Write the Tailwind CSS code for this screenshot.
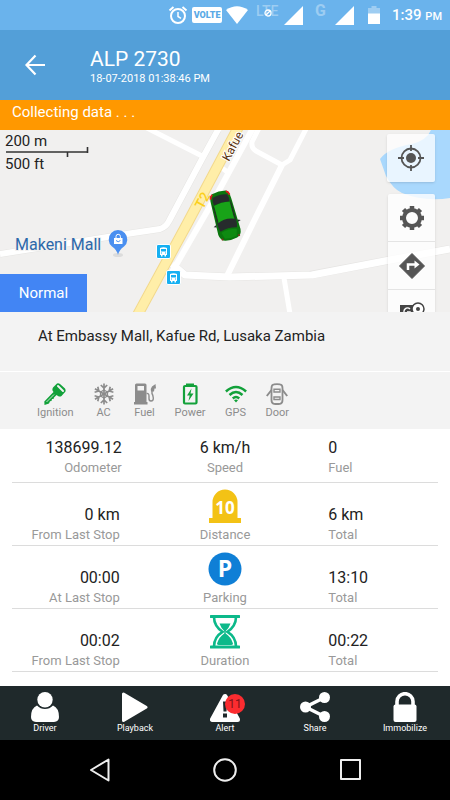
<!DOCTYPE html>
<html lang="en">
<head>
    <meta charset="UTF-8">
    <meta name="viewport" content="width=device-width, initial-scale=1.0">
    <title>ALP 2730</title>
    <script src="https://cdn.jsdelivr.net/npm/@tailwindcss/browser@4"></script>
</head>
<body class="bg-white text-[#222] font-['Roboto',sans-serif] antialiased">
<div class="min-h-screen flex flex-col">

    <!-- Status bar -->
    <div class="h-[30px] bg-[#6ab3ec] text-white flex items-center justify-end pr-2">
        <svg class="w-5 h-5 mr-1" viewBox="0 0 20 20" fill="none" stroke="#fff" stroke-width="2">
            <circle cx="10" cy="11" r="7"/>
            <path d="M10 7v4.500l3 1.800" stroke-width="1.500"/>
            <path d="M1.500 5.500l4-3.500M18.500 5.500l-4-3.500"/>
        </svg>
        <span class="w-[30px] h-4 bg-white rounded-xs text-[#5aa9e6] text-[9px] leading-4 font-black text-center mr-1">VOLTE</span>
        <svg class="w-[22px] h-[18px] mr-2" viewBox="0 0 22 18"><path d="M0 4Q11 -3.500 22 4L11 18Z" fill="#fff"/></svg>
        <span class="relative h-5 w-6 text-sm leading-3 font-medium text-white/35 mr-1">LTE
            <svg class="absolute left-2 top-1 w-2 h-2" viewBox="0 0 8 8" fill="none" stroke="#fff" stroke-width="1.300"><circle cx="4" cy="4" r="3"/><path d="M6 2L2 6"/></svg>
        </span>
        <svg class="w-[19px] h-[19px] mr-3" viewBox="0 0 19 19"><path d="M19 0V19H0Z" fill="#fff"/></svg>
        <span class="h-5 w-3 text-base leading-3 font-bold text-white/35 mr-2">G</span>
        <svg class="w-[19px] h-[19px] mr-3.5" viewBox="0 0 19 19"><path d="M19 0V19H0Z" fill="#fff"/></svg>
        <svg class="w-3 h-[18px] mr-3" viewBox="0 0 12 18"><path d="M3.500 0h5v2H12v6H0V2h3.500Z" fill="#fff" opacity=".35"/><path d="M0 7.500h12V18H0Z" fill="#fff"/></svg>
        <span class="text-[15px] font-medium">1:39 <span class="text-[11px]">PM</span></span>
    </div>

    <!-- Header -->
    <header class="h-[70px] bg-[#539fd8] text-white flex items-center pl-6">
        <button type="button" aria-label="Back" class="w-[66px]">
            <svg class="w-[22px] h-[22px]" viewBox="0 0 22 22" fill="none" stroke="#fff" stroke-width="2.200"><path d="M21 11H3M11.500 1.500L2.500 11l9 9.500"/></svg>
        </button>
        <div class="pt-1">
            <h1 class="text-[21px] leading-6">ALP 2730</h1>
            <p class="text-[11px] leading-4">18-07-2018 01:38:46 PM</p>
        </div>
    </header>
    <p class="h-[30px] bg-[#ff9800] text-white text-[15px] leading-6 px-3">Collecting data . . .</p>

    <!-- Map -->
    <div class="relative h-[182px] bg-[#f1f0ef] overflow-hidden">
        <svg class="w-full h-full" viewBox="0 0 450 182" preserveAspectRatio="xMidYMid slice">
            <path d="M431 0Q427 10 412 14Q388 18 380 29L386 46Q393 59 402 63Q425 72 450 68V0Z" fill="#a9d8fd"/>
            <g fill="none" stroke="#e6e5e3" stroke-width="8" stroke-linejoin="round">
                <path d="M0 124L133 103L160 99Q166 97 169 91L202 29L218 0" stroke-width="7"/>
                <path d="M172 134L185 145L230 147L310 145L390 130L450 119"/>
            </g>
            <g fill="none" stroke="#fff" stroke-linejoin="round">
                <path d="M0 124L133 103L160 99Q166 97 169 91L202 29L219 -2" stroke-width="6"/>
                <path d="M143 -4L202 26" stroke-width="5"/>
                <path d="M253 -2L216 66L172 142" stroke-width="6"/>
                <path d="M222 38L230 44" stroke-width="5"/>
                <path d="M259 -2L252 12Q251 18 256 21L282 35L290 30L307 -3" stroke-width="5"/>
                <path d="M282 35L254 91L226 148" stroke-width="6"/>
                <path d="M172 134L185 145L230 147L312 145L390 130L450 119" stroke-width="7"/>
                <path d="M284 148L290 184" stroke-width="5"/>
            </g>
            <path d="M137 186L187 94L240 -6" stroke="#f3d98c" stroke-width="11" fill="none"/>
            <path d="M137 186L187 94L240 -6" stroke="#ffeea8" stroke-width="9" fill="none"/>
            <text x="203" y="80" transform="rotate(-62 203 80)" font-size="14" font-weight="500" fill="#fbcf1c">T2</text>
            <text x="229" y="32" transform="rotate(-62 229 32)" font-size="12" fill="#5d3716" stroke="#fff" stroke-width="2" paint-order="stroke">Kafue</text>
            <!-- bus stops -->
            <g id="bus">
                <rect x="156.500" y="114.500" width="14" height="14" rx="1.500" fill="#16b0f2" stroke="#fff"/>
                <path d="M160 118q3.500-1.500 7 0v7h-1v1.500h-1.500V125h-2v1.500H161V125h-1Z" fill="#fff"/>
                <path d="M161 119h5v2.500h-5Z" fill="#16b0f2"/>
                <path d="M161 123h1M165 123h1" stroke="#16b0f2"/>
            </g>
            <use href="#bus" x="10" y="26"/>
            <text x="15" y="120" font-size="16" fill="#2c68aa" stroke="#f1f0ef" stroke-width="2" paint-order="stroke">Makeni Mall</text>
            <ellipse cx="118" cy="125" rx="5" ry="2" fill="#dcdcdc"/>
            <path d="M118 125Q117 120 112 116.500A9.300 9.300 0 1 1 124 116.500Q119 120 118 125Z" fill="#4a8ff0"/>
            <path d="M114 108h8.500v6H114Z" fill="#fff"/>
            <path d="M116 108v-1.500a2.200 2.200 0 0 1 4.400 0V108" fill="none" stroke="#fff"/>
            <path d="M116 110.500q2.200 2.500 4.400 0" fill="none" stroke="#4a8ff0"/>
            <!-- vehicle, seen from above -->
            <g transform="translate(225 85.500) rotate(-15)">
                <path d="M-7 -24Q0 -25.500 7 -24Q10.500 -22 10.500 -15L11.500 17Q11 23 6 24.500Q0 26 -6 24.500Q-11 23 -11.500 17L-10.500 -15Q-10.500 -22 -7 -24Z" fill="#0a760d"/>
                <path d="M-9.500 -14L-8 -10V3L-10 8ZM9.500 -14L8 -10V3L10 8Z" fill="#1d3a20"/>
                <path d="M-8 -12Q0 -14 8 -12V6H-8Z" fill="#18a318"/>
                <path d="M-7.500 -20Q0 -22.500 7.500 -20Q9 -16 8 -12.500Q0 -14 -8 -12.500Q-9 -16 -7.500 -20Z" fill="#262b2c"/>
                <path d="M-9.500 6Q0 1.500 9.500 6Q10 10 8.500 14.500Q0 12 -8.500 14.500Q-10 10 -9.500 6Z" fill="#262b2c"/>
                <path d="M-8 16Q0 13.500 8 16L6 22.500Q0 24 -6 22.500Z" fill="#0e8a11"/>
                <path d="M-11 7l-3 1.500 3 1ZM11 7l3 1.500-3 1Z" fill="#262b2c"/>
                <path d="M-9.800 -19Q-9.500 -22 -7 -23.300M9.800 -19Q9.500 -22 7 -23.300" stroke="#e01a1a" stroke-width="1.800" fill="none"/>
                <path d="M-9 22l1 1M9 22l-1 1" stroke="#8d2b1c" stroke-width="2"/>
            </g>
            <!-- scale bar -->
            <g font-size="15" fill="#222" stroke="#f1f0ef" stroke-width="2" paint-order="stroke">
                <text x="5" y="16">200 m</text>
                <text x="5" y="39">500 ft</text>
            </g>
            <path d="M6 22H88M87.500 17v6M67.500 22v5" stroke="#333" stroke-width="1.600" fill="none"/>
        </svg>

        <button type="button" class="absolute left-0 bottom-0 w-[87px] h-[38px] bg-[#4285f4] text-white text-[15px]">Normal</button>

        <div class="absolute right-[15px] top-1 flex flex-col items-end gap-3">
            <button type="button" aria-label="My location" class="w-12 h-12 bg-white/75 rounded-xs shadow flex items-center justify-center">
                <svg class="w-[26px] h-[26px]" viewBox="0 0 26 26" fill="none" stroke="#555" stroke-width="1.800"><circle cx="13" cy="13" r="9.500"/><circle cx="13" cy="13" r="5" fill="#555" stroke="none"/><path d="M13 0v6M13 20v6M0 13h6M20 13h6"/></svg>
            </button>
            <div class="w-[47px] bg-white/80 rounded-xs shadow-sm divide-y divide-[#e4e4e4]">
                <button type="button" aria-label="Settings" class="w-full h-12 flex items-center justify-center">
                    <svg class="w-6 h-6" viewBox="0 0 24 24" fill="none" stroke="#555">
                        <circle cx="12" cy="12" r="8" stroke-width="4"/>
                        <path d="M12 0v4M12 20v4M0 12h4M20 12h4M3.500 3.500l3 3M17.500 17.500l3 3M20.500 3.500l-3 3M6.500 17.500l-3 3" stroke-width="4.500"/>
                    </svg>
                </button>
                <button type="button" aria-label="Directions" class="w-full h-12 flex items-center justify-center">
                    <svg class="w-[26px] h-[26px]" viewBox="0 0 26 26"><path d="M13 0.500L25.500 13L13 25.500L0.500 13Z" fill="#555" stroke="#555" stroke-linejoin="round"/><path d="M9 17v-5.500h7" fill="none" stroke="#fff" stroke-width="2.500"/><path d="M15.500 7.500l5 4-5 4Z" fill="#fff"/></svg>
                </button>
                <button type="button" aria-label="Street view" class="w-full h-12 flex items-start justify-center pt-3">
                    <svg class="w-[26px] h-[26px]" viewBox="0 0 26 26"><path d="M1 3H20V24H1Z" fill="#444"/><path d="M11 7a3.500 3.500 0 1 0 0 5V10H8" fill="none" stroke="#fff" stroke-width="1.500"/><path d="M19 18Q13 10 13 7a6 6 0 0 1 12 0Q25 10 19 18Z" fill="#fff" stroke="#444" stroke-width="1.500"/><circle cx="19" cy="7" r="2" fill="#444"/></svg>
                </button>
            </div>
        </div>
    </div>

    <!-- Address and sensors -->
    <p class="h-[60px] bg-[#f3f3f3] border-b border-white text-[15px] leading-[48px] pl-[38px]">At Embassy Mall, Kafue Rd, Lusaka Zambia</p>
    <ul class="h-[57px] bg-[#f3f3f3] text-[#8c8c8c] text-[11px] leading-4 flex gap-[19px] pl-[37px] pt-[11px] text-center">
        <li class="flex flex-col items-center">
            <svg class="w-[22px] h-[22px]" viewBox="0 0 22 22"><path d="M13 .5Q14.500 0 16 1L21 5.500Q22 7 21.500 8.500L17.500 13Q16 14 14 13L12.500 12L10 14.500L9.500 16L8 16L7.500 18L6 18.200L5 20.500L.5 22L.3 18.500L9.500 9L8.500 7.500Q8 6 9 4.500Z" fill="#12a13a"/><path d="M14 3l5 5" stroke="#f3f3f3" stroke-width="2" stroke-linecap="round"/><path d="M2.500 19L10 11.500" stroke="#f3f3f3" stroke-width=".8"/></svg>
            <span>Ignition</span>
        </li>
        <li class="flex flex-col items-center">
            <svg class="w-[22px] h-[22px]" viewBox="0 0 22 22" fill="none" stroke="#8c8c8c" stroke-width="1.700">
                <g id="arm"><path d="M11 .5v21M7.800 2L11 5L14.200 2M7.800 20L11 17L14.200 20"/></g>
                <use href="#arm" transform="rotate(60 11 11)"/>
                <use href="#arm" transform="rotate(120 11 11)"/>
                <path d="M11 7L14.500 9V13L11 15L7.500 13V9Z" stroke-width="1.200"/>
            </svg>
            <span>AC</span>
        </li>
        <li class="flex flex-col items-center">
            <svg class="w-[22px] h-[22px]" viewBox="0 0 22 22"><path d="M1 2Q1 .5 2.500 .5H11Q12.500 .5 12.500 2V19H13.500V21.500H0V19H1ZM3.500 3V7.500H10V3Z" fill="#8c8c8c" fill-rule="evenodd"/><path d="M12.500 10.500Q15 10 15 13V15.500Q15 18 17 18Q19.500 18 19.300 15Q19 12 18 10.500V7" fill="none" stroke="#8c8c8c" stroke-width="1.400"/><path d="M21.500 1L18 3.500Q16.500 5 17 8.500H20L20.500 5.500H22Z" fill="#8c8c8c"/></svg>
            <span>Fuel</span>
        </li>
        <li class="flex flex-col items-center">
            <svg class="w-[22px] h-[22px]" viewBox="0 0 22 22"><path d="M7 2.500V.5H15V2.500" fill="#12a13a"/><rect x="5" y="3" width="12.500" height="17.500" rx="1" fill="none" stroke="#12a13a" stroke-width="2.200"/><path d="M12.500 5.500L8 12.500h2.700L9.500 18L14.500 10.500H11.500Z" fill="#12a13a"/></svg>
            <span>Power</span>
        </li>
        <li class="flex flex-col items-center">
            <svg class="w-[22px] h-[22px]" viewBox="0 0 22 22" fill="none" stroke="#12a13a" stroke-width="2.500"><path d="M.9 8.500Q11 -.5 21.100 8.500M4.500 12Q11 6 17.500 12M7.800 15.500Q11 12.500 14.200 15.500"/><path d="M9 17.200Q11 15.700 13 17.200L11 19.500Z" fill="#12a13a" stroke="none"/></svg>
            <span>GPS</span>
        </li>
        <li class="flex flex-col items-center">
            <svg class="w-[22px] h-[22px]" viewBox="0 0 22 22" fill="none" stroke="#8c8c8c" stroke-width="1.800"><path d="M5.500 5Q5.500 1.500 8 1.300Q11 .8 14 1.300Q16.500 1.500 16.500 5V17Q16.500 20.500 14 20.800Q11 21.200 8 20.800Q5.500 20.500 5.500 17Z"/><path d="M8 6.300H14V9H8ZM8 14H14V16.500H8Z" stroke-width="1.400"/><path d="M5.500 7L.8 13M16.500 7L21.200 13" stroke-width="2"/></svg>
            <span>Door</span>
        </li>
    </ul>

    <!-- Statistics -->
    <main class="flex-1 px-3 text-base leading-5">
        <section class="grid grid-cols-[17fr_32fr_17fr] pt-[9px] pb-1 border-b border-[#dcdcdc]">
            <div class="text-right">
                <p class="leading-5">138699.12</p>
                <p class="text-[13px] leading-5 text-[#999]">Odometer</p>
            </div>
            <div class="text-center">
                <p class="leading-5">6 km/h</p>
                <p class="text-[13px] leading-5 text-[#999]">Speed</p>
            </div>
            <div>
                <p class="leading-5">0</p>
                <p class="text-[13px] leading-5 text-[#999]">Fuel</p>
            </div>
        </section>
        <section class="grid grid-cols-[17fr_32fr_17fr] items-end pt-1.5 border-b border-[#dcdcdc]">
            <div class="text-right pr-0.5">
                <p>0 km</p>
                <p class="text-[13px] leading-5 text-[#999]">From Last Stop</p>
            </div>
            <div class="flex flex-col items-center">
                <svg class="w-8 h-9 pb-0.5" viewBox="0 0 32 34"><path d="M3.500 29V13A12.500 12.500 0 0 1 28.500 13V29H32V34H0V29Z" fill="#f3c215"/><text x="16" y="25" text-anchor="middle" font-size="17" font-weight="700" font-family="Open Sans" fill="#fff">10</text></svg>
                <p class="text-[13px] leading-5 text-[#999]">Distance</p>
            </div>
            <div>
                <p>6 km</p>
                <p class="text-[13px] leading-5 text-[#999]">Total</p>
            </div>
        </section>
        <section class="grid grid-cols-[17fr_32fr_17fr] items-end pt-1.5 border-b border-[#dcdcdc]">
            <div class="text-right pr-0.5">
                <p>00:00</p>
                <p class="text-[13px] leading-5 text-[#999]">At Last Stop</p>
            </div>
            <div class="flex flex-col items-center">
                <svg class="w-[34px] h-9 pb-0.5" viewBox="0 0 34 34"><circle cx="17" cy="17" r="16.500" fill="#0f7fd6"/><text x="17" y="25" text-anchor="middle" font-size="23" font-weight="700" font-family="Open Sans" fill="#fff">P</text></svg>
                <p class="text-[13px] leading-5 text-[#999]">Parking</p>
            </div>
            <div>
                <p>13:10</p>
                <p class="text-[13px] leading-5 text-[#999]">Total</p>
            </div>
        </section>
        <section class="grid grid-cols-[17fr_32fr_17fr] items-end pt-1.5 border-b border-[#dcdcdc]">
            <div class="text-right pr-0.5">
                <p>00:02</p>
                <p class="text-[13px] leading-5 text-[#999]">From Last Stop</p>
            </div>
            <div class="flex flex-col items-center">
                <svg class="w-[30px] h-9 pb-0.5" viewBox="0 0 30 34"><path d="M1 1.500H29M1 32H29" stroke="#0cb98a" stroke-width="3" stroke-linecap="round"/><path d="M4 2Q4 11 12.500 16.800Q4 22 4 31.500M26 2Q26 11 17.500 16.800Q26 22 26 31.500" fill="none" stroke="#0cb98a" stroke-width="2.600"/><path d="M9.500 8.500H20.500Q19 13 15.700 16V18.500Q21 22 23 28.500Q23 30 21 30H9Q7 30 7 28.500Q9 22 14.300 18.500V16Q11 13 9.500 8.500Z" fill="#0cb98a"/></svg>
                <p class="text-[13px] leading-5 text-[#999]">Duration</p>
            </div>
            <div>
                <p>00:22</p>
                <p class="text-[13px] leading-5 text-[#999]">Total</p>
            </div>
        </section>
    </main>

    <!-- Actions -->
    <nav class="h-[54px] bg-[#1f292b] text-white text-[9px] leading-3 grid grid-cols-5 pt-1.5">
        <a href="#" class="flex flex-col items-center">
            <svg class="w-[30px] h-[30px]" viewBox="0 0 30 30" fill="#fff"><circle cx="15" cy="7.700" r="7.700"/><path d="M7 13.500Q10.500 17 15 17Q19.500 17 23 13.500Q29 16 29 25Q29 29.500 24 30H6Q1 29.500 1 25Q1 16 7 13.500Z"/></svg>
            Driver
        </a>
        <a href="#" class="flex flex-col items-center">
            <svg class="w-[30px] h-[30px]" viewBox="0 0 30 30"><path d="M3.500 2V28.500L26 15.200Z" fill="#fff" stroke="#fff" stroke-width="3" stroke-linejoin="round"/></svg>
            Playback
        </a>
        <a href="#" class="relative flex flex-col items-center">
            <svg class="w-[30px] h-[30px]" viewBox="0 0 30 30"><path d="M15 4.500L2.500 27.500H27.500Z" fill="#fff" stroke="#fff" stroke-width="5" stroke-linejoin="round"/><path d="M13 9.500h4l-.5 10h-3ZM13 21.500h4v4h-4Z" fill="#1f292b"/></svg>
            <span class="absolute left-1/2 top-0.5 w-5 h-5 rounded-full bg-[#fb2c30] text-[#7d1418] text-xs leading-5 text-center">11</span>
            Alert
        </a>
        <a href="#" class="flex flex-col items-center">
            <svg class="w-[30px] h-[30px]" viewBox="0 0 30 30" fill="#fff"><circle cx="24.500" cy="5.500" r="5.500"/><circle cx="5.500" cy="15" r="5.500"/><circle cx="24.500" cy="24.500" r="5.500"/><path d="M24.500 5.500L5.500 15L24.500 24.500" fill="none" stroke="#fff" stroke-width="3.500"/></svg>
            Share
        </a>
        <a href="#" class="flex flex-col items-center">
            <svg class="w-[30px] h-[30px]" viewBox="0 0 30 30"><rect x="3.500" y="12.500" width="23" height="17.500" rx="2" fill="#fff"/><path d="M7 14V9.500a8 7.800 0 0 1 16 0V14" fill="none" stroke="#fff" stroke-width="3.600"/></svg>
            Immobilize
        </a>
    </nav>

    <!-- System navigation -->
    <div class="h-[60px] bg-black grid grid-cols-3 px-9 items-center justify-items-center">
        <button type="button" aria-label="Back"><svg class="w-6 h-6" viewBox="0 0 24 24" fill="none" stroke="#eee" stroke-width="2" stroke-linejoin="round"><path d="M21.500 1.500V22.500L4 12Z"/></svg></button>
        <button type="button" aria-label="Home"><svg class="w-6 h-6" viewBox="0 0 24 24" fill="none" stroke="#eee" stroke-width="2"><circle cx="12" cy="12" r="10.800"/></svg></button>
        <button type="button" aria-label="Recent apps"><svg class="w-6 h-6" viewBox="0 0 24 24" fill="none" stroke="#eee" stroke-width="2" stroke-linejoin="round"><path d="M2 2H21V21H2Z"/></svg></button>
    </div>
</div>
</body>
</html>
